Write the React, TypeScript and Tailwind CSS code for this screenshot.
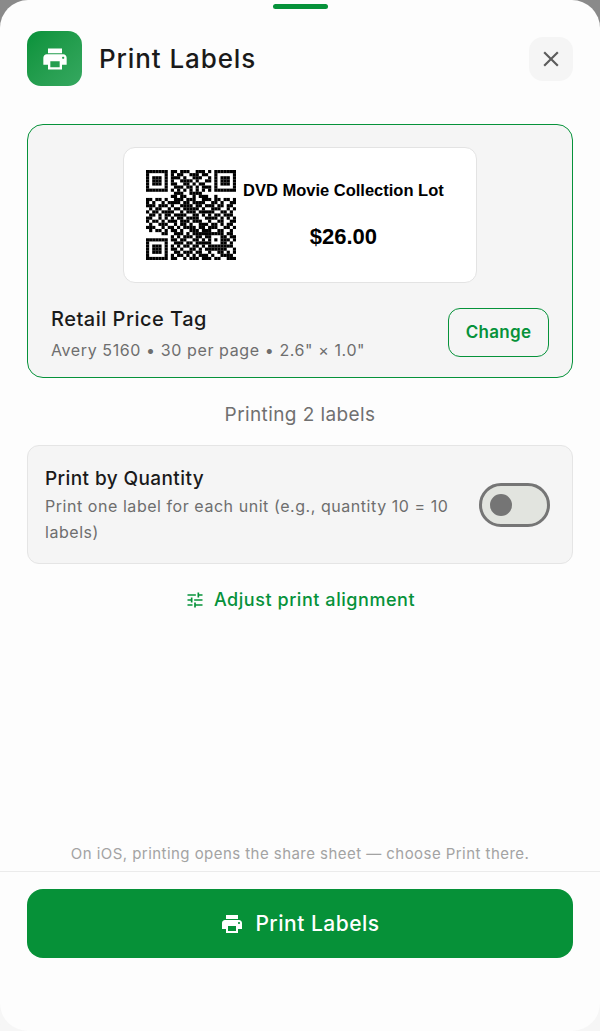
import { MdClose, MdPrint, MdTune } from "react-icons/md";

// 29x29 qr modules, finders + alignment get stamped on top in qrCells()
const QR_ROWS = [
  "00000000110111001110100000000",
  "00000000101100111011000000000",
  "00000000111010011100100000000",
  "00000000100111101001100000000",
  "00000000110011010110000000000",
  "00000000011101101011100000000",
  "00000000101010101010100000000",
  "00000000011100111100000000000",
  "00000000110110010111001000000",
  "11011010011101110011101101101",
  "10100101111011011110011010011",
  "11101110100111101101110110110",
  "01011001011011111010011100101",
  "10110111100101110111110011010",
  "01101011011110011010101101110",
  "11001010101101111001111010101",
  "10110101110111011100100110011",
  "01001110010110100111011010110",
  "11100101101011110110111001101",
  "01011010110100111011100110010",
  "00000110011101011111111100110",
  "00000000101011101101111011011",
  "00000000110110011010010001101",
  "00000000011101101111010101010",
  "00000000101011011010110001110",
  "00000000110100110101111111001",
  "00000000011011101100100110101",
  "00000000101101010111010011110",
  "00000000110010111011101100111",
];

function qrCells() {
  const grid = QR_ROWS.map((row) => row.split("").map((c) => c === "1"));
  const stamp = (ox: number, oy: number, size: number) => {
    for (let y = 0; y < size; y++) {
      for (let x = 0; x < size; x++) {
        const ring = Math.min(x, y, size - 1 - x, size - 1 - y);
        grid[oy + y][ox + x] = size === 7 ? ring !== 1 : ring !== 1;
      }
    }
  };
  stamp(0, 0, 7);
  stamp(22, 0, 7);
  stamp(0, 22, 7);
  stamp(20, 20, 5);
  return grid;
}

function QrCode() {
  const grid = qrCells();
  return (
    <svg viewBox="0 0 29 29" className="h-[90px] w-[90px] shrink-0" shapeRendering="auto">
      {grid.map((row, y) =>
        row.map((on, x) => (on ? <rect key={`${x}-${y}`} x={x} y={y} width={1.02} height={1.02} fill="#000" /> : null)),
      )}
    </svg>
  );
}

export default function App() {
  return (
    <div className="h-[1031px] w-[600px] overflow-hidden bg-gradient-to-b from-[#8a8a8a] from-[4%] to-[#f6f6f6] to-[6%] font-['Inter',sans-serif]">
      <div className="flex h-full flex-col rounded-[28px] bg-[#fdfdfd]">
        <div className="mx-auto mt-1 h-[5px] w-[55px] rounded-full bg-[#06923a]" />

        <div className="mt-[22px] flex items-center justify-between px-[27px]">
          <div className="flex items-center gap-[17px]">
            <div className="flex h-[55px] w-[55px] items-center justify-center rounded-[14px] bg-gradient-to-br from-[#06923a] to-[#35a860]">
              <MdPrint className="h-[28px] w-[28px] text-white" />
            </div>
            <h1 className="text-[26px] font-medium tracking-[0.9px] text-[#1a1a1a]">Print Labels</h1>
          </div>
          <button className="flex h-[44px] w-[44px] items-center justify-center rounded-[14px] bg-[#f5f5f5] text-[#5c5c5c]">
            <MdClose className="h-[26px] w-[26px]" />
          </button>
        </div>

        <div className="mx-[27px] mt-[38px] rounded-[16px] border-[1.5px] border-[#06923a] bg-[#f5f5f5] px-[23px] pb-[15px] pt-[22px]">
          <div className="mx-auto flex h-[136px] w-[354px] items-center gap-[7px] rounded-[12px] border border-[#e3e3e3] bg-white pl-[22px] font-['Liberation_Sans',sans-serif] text-black">
            <QrCode />
            <div className="flex flex-col items-center gap-[24px]">
              <span className="whitespace-nowrap text-[16.5px] font-bold leading-[20px]">DVD Movie Collection Lot</span>
              <span className="text-[22px] font-bold leading-[26px]">$26.00</span>
            </div>
          </div>
          <div className="mt-[20px] flex items-center justify-between">
            <div>
              <div className="text-[20px] font-medium leading-[32px] tracking-[0.5px] text-[#1a1a1a]">Retail Price Tag</div>
              <div className="mt-[3px] text-[16px] leading-[24px] tracking-[0.6px] text-[#6e6e6e]">
                Avery 5160 • 30 per page • 2.6" × 1.0"
              </div>
            </div>
            <button className="flex h-[49px] w-[101px] items-center justify-center rounded-[12px] border-[1.5px] border-[#06923a] text-[17px] font-semibold tracking-[0.3px] text-[#06923a]">
              Change
            </button>
          </div>
        </div>

        <p className="mt-[24px] text-center text-[19px] leading-[26px] tracking-[0.4px] text-[#707070]">Printing 2 labels</p>

        <div className="mx-[27px] mt-[17px] flex h-[119px] items-center justify-between rounded-[12px] border-[1.5px] border-[#e5e5e5] bg-[#f5f5f5] pl-[17px] pr-[22px]">
          <div className="w-[420px]">
            <div className="text-[19px] font-medium leading-[28px] tracking-[0.4px] text-[#1a1a1a]">Print by Quantity</div>
            <div className="text-[16px] leading-[26px] tracking-[0.55px] text-[#6e6e6e]">
              Print one label for each unit (e.g., quantity 10 = 10 labels)
            </div>
          </div>
          <div className="flex h-[44px] w-[71px] items-center rounded-full border-[3px] border-[#757575] bg-[#e2e4df] pl-[8px]">
            <div className="h-[22px] w-[22px] rounded-full bg-[#757575]" />
          </div>
        </div>

        <div className="mt-[23px] flex items-center justify-center gap-[9px] text-[#06923a]">
          <MdTune className="h-[20px] w-[20px]" />
          <span className="text-[18px] font-medium leading-[26px] tracking-[0.55px]">Adjust print alignment</span>
        </div>

        <p className="mt-auto pb-[6px] text-center text-[15px] leading-[22px] tracking-[0.45px] text-[#a3a3a3]">
          On iOS, printing opens the share sheet — choose Print there.
        </p>
        <div className="border-t border-[#ebebeb] px-[27px] pb-[73px] pt-[17px]">
          <button className="flex h-[69px] w-full items-center justify-center gap-[11px] rounded-[16px] bg-[#069138] text-white">
            <MdPrint className="h-[24px] w-[24px]" />
            <span className="text-[21px] font-medium tracking-[0.5px]">Print Labels</span>
          </button>
        </div>
      </div>
    </div>
  );
}
